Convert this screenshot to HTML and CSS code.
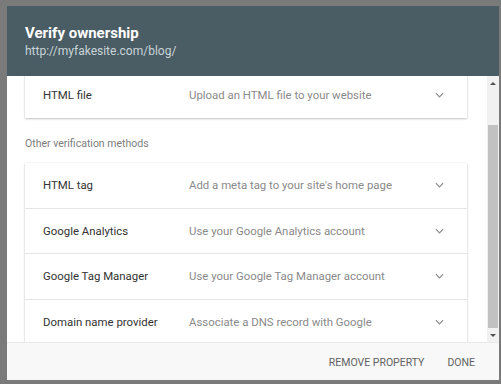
FILE: index.html
```html
<!DOCTYPE html>
<html>
<head>
<meta charset="utf-8">
<link rel="stylesheet" href="styles.css">
</head>
<body>
<div class="dialog">
  <div class="header">
    <div class="title">Verify ownership</div>
    <div class="url">http://myfakesite.com/blog/</div>
  </div>
  <div class="body">
    <div class="viewport">
      <div class="content">
        <div class="card">
          <div class="row">
            <span class="label">HTML file</span>
            <span class="desc">Upload an HTML file to your website</span>
            <svg class="chev" viewBox="0 0 10 6" width="9" height="6"><path d="M1 1l4 4 4-4" fill="none" stroke="#8a8a8a" stroke-width="1.3"/></svg>
          </div>
        </div>
        <div class="section">Other verification methods</div>
        <div class="card">
          <div class="row">
            <span class="label">HTML tag</span>
            <span class="desc">Add a meta tag to your site's home page</span>
            <svg class="chev" viewBox="0 0 10 6" width="9" height="6"><path d="M1 1l4 4 4-4" fill="none" stroke="#8a8a8a" stroke-width="1.3"/></svg>
          </div>
          <div class="row">
            <span class="label">Google Analytics</span>
            <span class="desc">Use your Google Analytics account</span>
            <svg class="chev" viewBox="0 0 10 6" width="9" height="6"><path d="M1 1l4 4 4-4" fill="none" stroke="#8a8a8a" stroke-width="1.3"/></svg>
          </div>
          <div class="row">
            <span class="label">Google Tag Manager</span>
            <span class="desc">Use your Google Tag Manager account</span>
            <svg class="chev" viewBox="0 0 10 6" width="9" height="6"><path d="M1 1l4 4 4-4" fill="none" stroke="#8a8a8a" stroke-width="1.3"/></svg>
          </div>
          <div class="row">
            <span class="label">Domain name provider</span>
            <span class="desc">Associate a DNS record with Google</span>
            <svg class="chev" viewBox="0 0 10 6" width="9" height="6"><path d="M1 1l4 4 4-4" fill="none" stroke="#8a8a8a" stroke-width="1.3"/></svg>
          </div>
        </div>
      </div>
    </div>
    <div class="scrollbar">
      <div class="arrow up"></div>
      <div class="track"><div class="thumb"></div></div>
      <div class="arrow down"></div>
    </div>
  </div>
  <div class="footer">
    <span class="btn">REMOVE PROPERTY</span>
    <span class="btn">DONE</span>
  </div>
</div>
</body>
</html>
```
FILE: styles.css
```css
html, body {
  margin: 0;
  padding: 0;
  background: #7a7a7a;
  font-family: Roboto, "Liberation Sans", sans-serif;
}
.dialog {
  margin: 6px 2px 0 7px;
  width: 492px;
  height: 374px;
  display: flex;
  flex-direction: column;
  background: #fff;
  overflow: hidden;
}
.header {
  height: 70px;
  box-sizing: border-box;
  padding: 17px 18px 0;
  background: #4a5c64;
}
.title {
  color: #fff;
  font-size: 15px;
  font-weight: 700;
  line-height: 20px;
}
.url {
  color: #c9d4d9;
  font-size: 12px;
  line-height: 16px;
}
.body {
  height: 266px;
  display: flex;
}
.viewport {
  flex: 1;
  overflow: hidden;
}
.content {
  margin-top: -5px;
  padding: 0 20px 0 18px;
}
.card {
  background: #fff;
  box-shadow: 0 1px 2px rgba(0,0,0,0.22), 0 0 1px rgba(0,0,0,0.12);
}
.row {
  height: 45.5px;
  box-sizing: border-box;
  display: flex;
  align-items: center;
  padding: 0 23px 0 18px;
  border-bottom: 1px solid #e4e4e4;
  font-size: 11.4px;
}
.row:last-child { border-bottom: none; }
.card:first-child .row { height: 47px; }
.label {
  width: 146px;
  color: #333;
}
.desc {
  flex: 1;
  color: #8a8a8a;
}
.chev { display: block; }
.section {
  font-size: 10.5px;
  color: #7d7d7d;
  padding: 19px 0 13px;
  line-height: 13px;
}
.scrollbar {
  width: 12px;
  background: #f1f1f1;
  display: flex;
  flex-direction: column;
}
.arrow {
  height: 14px;
  display: flex;
  align-items: center;
  justify-content: center;
}
.arrow::before {
  content: "";
  border-left: 3px solid transparent;
  border-right: 3px solid transparent;
}
.arrow.up::before { border-bottom: 3px solid #505050; }
.arrow.down::before { border-top: 3px solid #505050; }
.track {
  flex: 1;
  padding: 35px 1px 0 1px;
}
.thumb {
  height: 203px;
  background: #c1c1c1;
}
.footer {
  flex: 1;
  display: flex;
  justify-content: flex-end;
  align-items: center;
  gap: 23px;
  padding: 2px 24px 0 0;
  background: #f8f8f8;
  border-top: 1px solid #e8e8e8;
}
.btn {
  font-size: 10.5px;
  color: #616161;
}
```
